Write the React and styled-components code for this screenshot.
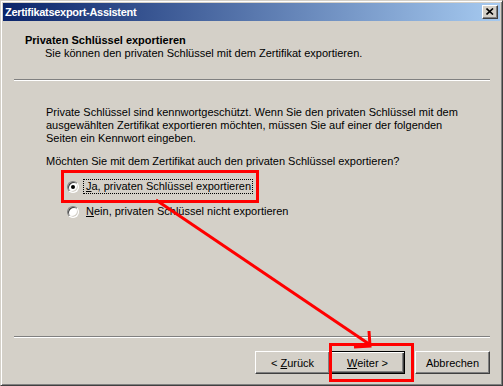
import React from "react";
import styled, { createGlobalStyle } from "styled-components";

const Global = createGlobalStyle`
  html, body { margin: 0; padding: 0; background: #d4d0c8; }
  body { font-family: "Liberation Sans", Arial, sans-serif; font-size: 11px; color: #000; }
  * { box-sizing: border-box; }
`;

const Window = styled.div`
  position: relative;
  width: 503px;
  height: 386px;
  background: #d4d0c8;
  border: 1px solid;
  border-color: #d4d0c8 #404040 #404040 #d4d0c8;
  box-shadow: inset 1px 1px #ffffff, inset -1px -1px #808080;
  padding: 2px;
  display: flex;
  flex-direction: column;
  overflow: hidden;
`;

const TitleBar = styled.div`
  height: 18px;
  flex: none;
  display: flex;
  align-items: center;
  justify-content: space-between;
  padding: 0 2px 0 2px;
  background: linear-gradient(to right, #0a246a 0%, #a6caf0 100%);
`;

const TitleText = styled.span`
  color: #fff;
  font-weight: bold;
  font-size: 11px;
  line-height: 13px;
  letter-spacing: -0.3px;
`;

const CloseButton = styled.div`
  width: 16px;
  height: 14px;
  background: #d4d0c8;
  border: 1px solid;
  border-color: #ffffff #404040 #404040 #ffffff;
  box-shadow: inset -1px -1px #808080;
  display: flex;
  align-items: center;
  justify-content: center;
  padding-bottom: 1px;
  padding-right: 1px;
`;

const Header = styled.div`
  flex: none;
  padding: 13px 0 0 22px;
`;

const HeaderTitle = styled.div`
  font-weight: bold;
  line-height: 13px;
`;

const HeaderSub = styled.div`
  padding-left: 20px;
  line-height: 13px;
`;

const Rule = styled.div`
  flex: none;
  height: 2px;
  margin: ${(p) => p.$top || 0}px 10px 0 11px;
  border-top: 1px solid #808080;
  border-bottom: 1px solid #ffffff;
`;

const Content = styled.div`
  flex: 1;
  padding: 25px 0 0 43px;
  line-height: 13px;
`;

const Paragraph = styled.p`
  margin: 0;
  line-height: 13px;
`;

const Question = styled.p`
  margin: 10px 0 0 0;
  line-height: 13px;
`;

const RadioList = styled.div`
  margin-top: 11px;
  padding-left: 21px;
  display: flex;
  flex-direction: column;
  gap: 10px;
`;

const RadioRow = styled.label`
  display: flex;
  align-items: center;
  height: 15px;
  gap: 4px;
`;

const RadioCircle = styled.span`
  position: relative;
  width: 12px;
  height: 12px;
  border-radius: 50%;
  background: #fff;
  border: 1px solid;
  border-color: #808080 #ffffff #ffffff #808080;
  box-shadow: inset 1px 1px #404040, inset -1px -1px #d4d0c8;
  flex: none;
  &::after {
    content: "";
    display: ${(p) => (p.$checked ? "block" : "none")};
    position: absolute;
    left: 3px;
    top: 3px;
    width: 4px;
    height: 4px;
    border-radius: 50%;
    background: #000;
  }
`;

const RadioLabel = styled.span`
  padding: 0 1px 0 2px;
  height: 15px;
  line-height: 13px;
  border: 1px dotted ${(p) => (p.$focused ? "#000" : "transparent")};
`;

const Key = styled.span`
  text-decoration: underline;
`;

const ButtonBar = styled.div`
  flex: none;
  display: flex;
  justify-content: flex-end;
  padding: 13px 10px 9px 0;
`;

const ButtonPair = styled.div`
  display: flex;
  margin-right: 10px;
`;

const Button = styled.button`
  width: 75px;
  height: 23px;
  font-family: "Liberation Sans", Arial, sans-serif;
  font-size: 11px;
  color: #000;
  background: #d4d0c8;
  padding: 0;
  border: 1px solid;
  border-color: ${(p) => (p.$default ? "#000" : "#ffffff #404040 #404040 #ffffff")};
  box-shadow: ${(p) =>
    p.$default
      ? "inset 1px 1px #ffffff, inset -1px -1px #404040, inset -2px -2px #808080"
      : "inset -1px -1px #808080"};
`;

const Highlight = styled.div`
  position: absolute;
  border: 3px solid #ff0000;
  pointer-events: none;
`;

const ArrowLayer = styled.svg`
  position: absolute;
  left: 0;
  top: 0;
  pointer-events: none;
`;

export default function App() {
  return (
    <>
      <Global />
      <Window>
        <TitleBar>
          <TitleText>Zertifikatsexport-Assistent</TitleText>
          <CloseButton>
            <svg width="8" height="7" viewBox="0 0 8 7">
              <path d="M0.5 0.5 L7 6.5 M7 0.5 L0.5 6.5" stroke="#000" strokeWidth="1.6" />
            </svg>
          </CloseButton>
        </TitleBar>
        <Header>
          <HeaderTitle>Privaten Schlüssel exportieren</HeaderTitle>
          <HeaderSub>Sie können den privaten Schlüssel mit dem Zertifikat exportieren.</HeaderSub>
        </Header>
        <Rule $top={19} />
        <Content>
          <Paragraph>
            Private Schlüssel sind kennwortgeschützt. Wenn Sie den privaten Schlüssel mit dem
            <br />
            ausgewählten Zertifikat exportieren möchten, müssen Sie auf einer der folgenden
            <br />
            Seiten ein Kennwort eingeben.
          </Paragraph>
          <Question>Möchten Sie mit dem Zertifikat auch den privaten Schlüssel exportieren?</Question>
          <RadioList>
            <RadioRow>
              <RadioCircle $checked />
              <RadioLabel $focused>
                <Key>J</Key>a, privaten Schlüssel exportieren
              </RadioLabel>
            </RadioRow>
            <RadioRow>
              <RadioCircle />
              <RadioLabel>
                <Key>N</Key>ein, privaten Schlüssel nicht exportieren
              </RadioLabel>
            </RadioRow>
          </RadioList>
        </Content>
        <Rule />
        <ButtonBar>
          <ButtonPair>
            <Button>
              &lt; <Key>Z</Key>urück
            </Button>
            <Button $default>
              <Key>W</Key>eiter &gt;
            </Button>
          </ButtonPair>
          <Button>Abbrechen</Button>
        </ButtonBar>
        <Highlight style={{ left: 60, top: 169, width: 198, height: 33 }} />
        <Highlight style={{ left: 328, top: 342, width: 85, height: 39 }} />
        <ArrowLayer width="503" height="386" viewBox="0 0 503 386">
          <line x1="155" y1="199" x2="368" y2="343" stroke="#ff0000" strokeWidth="3" />
          <polyline points="368,330 369,345 353,346" fill="none" stroke="#ff0000" strokeWidth="3" />
        </ArrowLayer>
      </Window>
    </>
  );
}
